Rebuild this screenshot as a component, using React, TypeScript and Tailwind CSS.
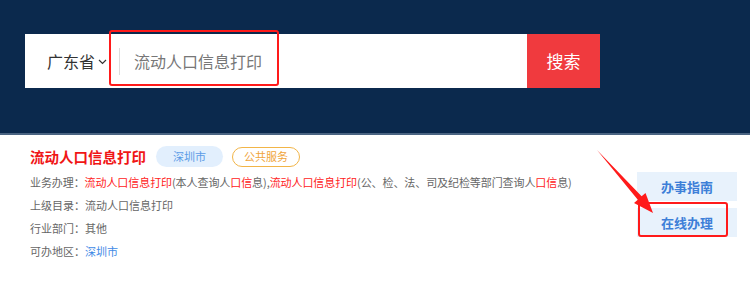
import React from "react";

const font = { fontFamily: '"Noto Sans CJK SC", "Noto Sans", sans-serif' };

export default function App() {
  return (
    <div
      className="relative w-[750px] h-[283px] overflow-hidden bg-white"
      style={font}
    >
      {/* header */}
      <div className="h-[135px] bg-[#0b294d] border-b-2 border-[#4a6482] pt-[34px] pl-[25px]">
        <div className="flex h-[54px] w-[575px] bg-white">
          <div className="flex flex-1 items-center">
            <div className="flex items-center pl-[22px] text-[16px] text-[#333]">
              <span>广东省</span>
              <svg width="9" height="6" viewBox="0 0 9 6" className="ml-[3px] mt-[2px]">
                <path d="M1 1 L4.5 4.5 L8 1" fill="none" stroke="#333" strokeWidth="1.2" />
              </svg>
            </div>
            <div className="ml-[12px] h-[27px] w-px bg-[#dcdcdc]" />
            <div className="ml-[14px] text-[16px] text-[#777]">流动人口信息打印</div>
          </div>
          <button className="w-[73px] h-full bg-[#f03a3e] text-white text-[17px]">
            搜索
          </button>
        </div>
      </div>

      {/* results */}
      <div className="flex pt-[11px] pl-[30px]">
        <div className="flex-1">
          <div className="flex items-center h-[21px]">
            <span className="text-[14.5px] font-bold text-[#f01616]">流动人口信息打印</span>
            <span className="ml-[10px] flex h-[21px] w-[67px] items-center justify-center rounded-full bg-[#e2effd] text-[11px] text-[#5b9be6]">
              深圳市
            </span>
            <span className="ml-[9px] flex h-[20px] w-[68px] items-center justify-center rounded-full border border-[#f2b548] text-[11px] text-[#f0a43a]">
              公共服务
            </span>
          </div>
          <div className="mt-[4px] text-[11px] leading-[23px] text-[#666]">
            <div className="whitespace-nowrap tracking-[-0.08px]">
              业务办理：<span className="text-[#f22]">流动人口信息打印</span>(本人查询人
              <span className="text-[#f22]">口信</span>息),
              <span className="text-[#f22]">流动人口信息打印</span>(公、检、法、司及纪检等部门查询人
              <span className="text-[#f22]">口信</span>息)
            </div>
            <div>上级目录：流动人口信息打印</div>
            <div>行业部门：其他</div>
            <div>
              可办地区：<span className="text-[#3f8ae6]">深圳市</span>
            </div>
          </div>
        </div>
        <div className="mt-[26px] mr-[13px] flex w-[100px] flex-col gap-[7px]">
          <div className="flex h-[29px] items-center justify-center bg-[#e8f2fc] text-[13px] font-bold text-[#3d7fd8]">
            办事指南
          </div>
          <div className="flex h-[29px] items-center justify-center bg-[#e8f2fc] text-[13px] font-bold text-[#3d7fd8]">
            在线办理
          </div>
        </div>
      </div>

      {/* annotations */}
      <div className="pointer-events-none absolute left-[109px] top-[30px] h-[56px] w-[170px] rounded-[3px] border-2 border-[#ff1a1a]" />
      <div className="pointer-events-none absolute left-[638px] top-[202px] h-[35px] w-[90px] rounded-[3px] border-[2.5px] border-[#ff1a1a]" />
      <svg className="pointer-events-none absolute left-0 top-0" width="750" height="283">
        <polygon
          points="597,150 641.6,196.3 645.5,193 653,213 634,203 637.8,199.7"
          fill="#ff1a1a"
        />
      </svg>
    </div>
  );
}
